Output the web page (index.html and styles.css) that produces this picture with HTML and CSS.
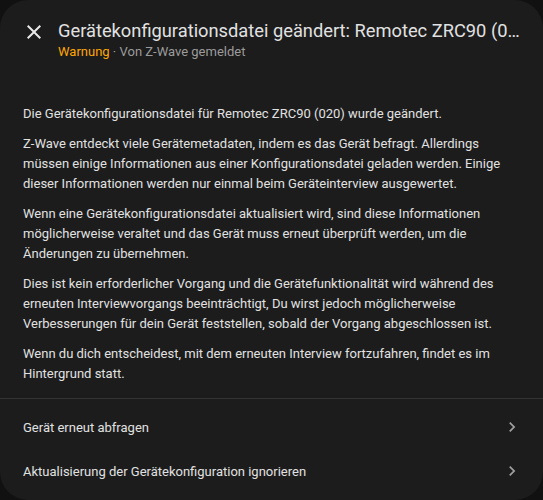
FILE: index.html
```html
<!DOCTYPE html>
<html lang="de">
<head>
    <meta charset="UTF-8">
    <meta name="viewport" content="width=device-width, initial-scale=1.0">
    <title>Gerätekonfigurationsdatei geändert</title>
    <link rel="stylesheet" href="styles.css">
</head>
<body>
    <div class="dialog">
        <div class="header">
            <button class="close" aria-label="Schließen">
                <svg width="24" height="24" viewBox="0 0 24 24">
                    <path d="M19 6.41 17.59 5 12 10.59 6.41 5 5 6.41 10.59 12 5 17.59 6.41 19 12 13.41 17.59 19 19 17.59 13.41 12z" fill="currentColor"/>
                </svg>
            </button>
            <div class="titles">
                <div class="title">Gerätekonfigurationsdatei geändert: Remotec ZRC90 (020)</div>
                <div class="subtitle"><span class="severity">Warnung</span> · Von Z-Wave gemeldet</div>
            </div>
        </div>

        <div class="content">
            <p>Die Gerätekonfigurationsdatei für Remotec ZRC90 (020) wurde geändert.</p>
            <p>Z-Wave entdeckt viele Gerätemetadaten, indem es das Gerät befragt. Allerdings müssen einige Informationen aus einer Konfigurationsdatei geladen werden. Einige dieser Informationen werden nur einmal beim Geräteinterview ausgewertet.</p>
            <p>Wenn eine Gerätekonfigurationsdatei aktualisiert wird, sind diese Informationen möglicherweise veraltet und das Gerät muss erneut überprüft werden, um die Änderungen zu übernehmen.</p>
            <p>Dies ist kein erforderlicher Vorgang und die Gerätefunktionalität wird während des erneuten Interviewvorgangs beeinträchtigt, Du wirst jedoch möglicherweise Verbesserungen für dein Gerät feststellen, sobald der Vorgang abgeschlossen ist.</p>
            <p>Wenn du dich entscheidest, mit dem erneuten Interview fortzufahren, findet es im Hintergrund statt.</p>
        </div>

        <div class="actions">
            <div class="action">
                <span>Gerät erneut abfragen</span>
                <svg class="chevron" width="24" height="24" viewBox="0 0 24 24">
                    <path d="M8.59 16.58 13.17 12 8.59 7.41 10 6l6 6-6 6z" fill="currentColor"/>
                </svg>
            </div>
            <div class="action">
                <span>Aktualisierung der Gerätekonfiguration ignorieren</span>
                <svg class="chevron" width="24" height="24" viewBox="0 0 24 24">
                    <path d="M8.59 16.58 13.17 12 8.59 7.41 10 6l6 6-6 6z" fill="currentColor"/>
                </svg>
            </div>
        </div>
    </div>
</body>
</html>
```

FILE: styles.css
```css
body {
    margin: 0;
    background-color: #111111;
    font-family: Roboto, "Liberation Sans", sans-serif;
    color: #e1e1e1;
}
.dialog {
    height: 500px;
    background-color: #1c1c1c;
    border-radius: 28px;
    overflow: hidden;
    display: flex;
    flex-direction: column;
}
.header {
    display: flex;
    align-items: flex-start;
    padding: 18px 18px 0 22px;
    gap: 12px;
    height: 44px;
}
.close {
    background: none;
    border: none;
    padding: 0;
    margin-top: 2px;
    color: #e8e8e8;
    width: 24px;
    height: 24px;
    flex-shrink: 0;
}
.titles {
    min-width: 0;
    flex: 1;
}
.title {
    font-size: 18.3px;
    line-height: 26px;
    white-space: nowrap;
    overflow: hidden;
    text-overflow: ellipsis;
}
.subtitle {
    font-size: 13px;
    line-height: 15px;
    color: #9b9b9b;
}
.severity {
    color: #ffa600;
}
.content {
    padding: 42px 24px 14px 23px;
    font-size: 13px;
    line-height: 20px;
    border-bottom: 1px solid #333333;
}
.content p {
    margin: 10px 0;
}
.content p:first-child {
    margin-top: 0;
}
.content p:last-child {
    margin-bottom: 0;
}
.actions {
    padding-top: 6px;
}
.action {
    display: flex;
    align-items: center;
    justify-content: space-between;
    height: 44px;
    padding: 0 21px 0 23px;
    font-size: 13px;
}
.chevron {
    color: #a0a0a0;
    width: 20px;
    height: 20px;
}
```
